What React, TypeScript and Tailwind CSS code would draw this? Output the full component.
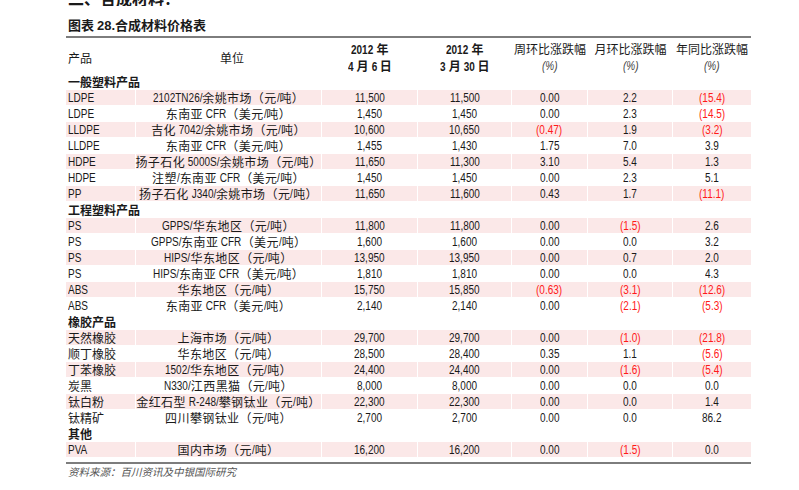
import React from "react";

type Row =
  | { kind: "section"; name: string }
  | { kind: "data"; name: string; unit: string; a: string; b: string; w: string; m: string; y: string; pink: boolean };

const d = (name: string, unit: string, a: string, b: string, w: string, m: string, y: string, pink: boolean): Row => ({
  kind: "data",
  name,
  unit,
  a,
  b,
  w,
  m,
  y,
  pink,
});

const rows: Row[] = [
  { kind: "section", name: "一般塑料产品" },
  d("LDPE", "2102TN26/余姚市场（元/吨）", "11,500", "11,500", "0.00", "2.2", "(15.4)", true),
  d("LDPE", "东南亚 CFR（美元/吨）", "1,450", "1,450", "0.00", "2.3", "(14.5)", false),
  d("LLDPE", "吉化 7042/余姚市场（元/吨）", "10,600", "10,650", "(0.47)", "1.9", "(3.2)", true),
  d("LLDPE", "东南亚 CFR（美元/吨）", "1,455", "1,430", "1.75", "7.0", "3.9", false),
  d("HDPE", "扬子石化 5000S/余姚市场（元/吨）", "11,650", "11,300", "3.10", "5.4", "1.3", true),
  d("HDPE", "注塑/东南亚 CFR（美元/吨）", "1,450", "1,450", "0.00", "2.3", "5.1", false),
  d("PP", "扬子石化 J340/余姚市场（元/吨）", "11,650", "11,600", "0.43", "1.7", "(11.1)", true),
  { kind: "section", name: "工程塑料产品" },
  d("PS", "GPPS/华东地区（元/吨）", "11,800", "11,800", "0.00", "(1.5)", "2.6", true),
  d("PS", "GPPS/东南亚 CFR（美元/吨）", "1,600", "1,600", "0.00", "0.0", "3.2", false),
  d("PS", "HIPS/华东地区（元/吨）", "13,950", "13,950", "0.00", "0.7", "2.0", true),
  d("PS", "HIPS/东南亚 CFR（美元/吨）", "1,810", "1,810", "0.00", "0.0", "4.3", false),
  d("ABS", "华东地区（元/吨）", "15,750", "15,850", "(0.63)", "(3.1)", "(12.6)", true),
  d("ABS", "东南亚 CFR（美元/吨）", "2,140", "2,140", "0.00", "(2.1)", "(5.3)", false),
  { kind: "section", name: "橡胶产品" },
  d("天然橡胶", "上海市场（元/吨）", "29,700", "29,700", "0.00", "(1.0)", "(21.8)", true),
  d("顺丁橡胶", "华东地区（元/吨）", "28,500", "28,400", "0.35", "1.1", "(5.6)", false),
  d("丁苯橡胶", "1502/华东地区（元/吨）", "24,400", "24,400", "0.00", "(1.6)", "(5.4)", true),
  d("炭黑", "N330/江西黑猫（元/吨）", "8,000", "8,000", "0.00", "0.0", "0.0", false),
  d("钛白粉", "金红石型 R-248/攀钢钛业（元/吨）", "22,300", "22,300", "0.00", "0.0", "1.4", true),
  d("钛精矿", "四川攀钢钛业（元/吨）", "2,700", "2,700", "0.00", "0.0", "86.2", false),
  { kind: "section", name: "其他" },
  d("PVA", "国内市场（元/吨）", "16,200", "16,200", "0.00", "(1.5)", "0.0", true),
];

const LATIN = '"Liberation Sans",Arial,sans-serif';
const CJK = '"Noto Sans CJK SC","Liberation Sans",sans-serif';

// Arial advance widths (em) used to compensate for the horizontal squeeze of latin runs
const AW: Record<string, number> = {
  " ": 0.278, "/": 0.278, "-": 0.333, ".": 0.278, ",": 0.278, "(": 0.333, ")": 0.333, "%": 0.889,
  A: 0.667, B: 0.667, C: 0.722, D: 0.722, E: 0.667, F: 0.611, G: 0.778, H: 0.722, I: 0.278, J: 0.5,
  K: 0.667, L: 0.556, M: 0.833, N: 0.722, O: 0.778, P: 0.667, Q: 0.778, R: 0.722, S: 0.667, T: 0.611,
  U: 0.722, V: 0.667, W: 0.944, X: 0.667, Y: 0.667, Z: 0.611,
};
const SCALE = 0.8;
const LFS = 12.5;

function emWidth(s: string) {
  let w = 0;
  for (const ch of s) w += AW[ch] ?? 0.556;
  return w;
}

function Mixed({ text, spaced }: { text: string; spaced?: boolean }) {
  const parts = text.split(/([\x20-\x7e]+)/).filter((p) => p.length > 0);
  return (
    <>
      {parts.map((p, i) =>
        /^[\x20-\x7e]+$/.test(p) ? (
          <span
            key={i}
            className="inline-block origin-left scale-x-[0.8] whitespace-pre text-[12.5px]"
            style={{ fontFamily: LATIN, marginRight: -emWidth(p) * LFS * (1 - SCALE) }}
          >
            {p}
          </span>
        ) : (
          <span key={i} className={`text-[12px] ${spaced ? "tracking-[0.4px]" : ""}`} style={{ fontFamily: CJK }}>
            {p}
          </span>
        )
      )}
    </>
  );
}

function Num({ v, last }: { v: string; last?: boolean }) {
  const red = v.startsWith("(");
  return (
    <div
      className={`flex items-center justify-center whitespace-nowrap ${last ? "" : "border-r border-white"} ${
        red ? "text-[#ff1a1a]" : "text-[#1a1a1a]"
      }`}
    >
      <Mixed text={v} />
    </div>
  );
}

function PctHead({ label }: { label: string }) {
  return (
    <div className="flex flex-col items-center">
      <span className="text-[12px]" style={{ fontFamily: CJK }}>
        {label}
      </span>
      <span className="italic text-[#444]">
        <Mixed text="(%)" />
      </span>
    </div>
  );
}

export default function App() {
  return (
    <div className="relative h-[490px] w-[799px] overflow-hidden bg-white text-[#1a1a1a]" style={{ fontFamily: CJK }}>
      <div className="ml-[66px] w-[685px]">
        <div className="flex h-[6px] items-end overflow-hidden">
          <div className="pl-[2px] text-[16px] font-bold leading-[16px]">二、合成材料：</div>
        </div>
        <div className="mt-[11px] pl-[2px] text-[13px] font-bold leading-[16px]">
          图表 <span style={{ fontFamily: LATIN }}>28.</span>合成材料价格表
        </div>
        <div className="mt-[2px] h-[2px] bg-[#7d7d7d]" />
        {/* header */}
        <div className="grid grid-cols-[70px_186px_96px_94px_76px_85px_78px] pt-[3px] text-[12px] leading-[16px]">
          <div className="flex items-center pl-[2px]">产品</div>
          <div className="flex items-center justify-center pl-[6px]">单位</div>
          <div className="flex flex-col items-center font-bold">
            <span>
              <Mixed text="2012 " />年
            </span>
            <span>
              <Mixed text="4 " />月<Mixed text=" 6 " />日
            </span>
          </div>
          <div className="flex flex-col items-center font-bold">
            <span>
              <Mixed text="2012 " />年
            </span>
            <span>
              <Mixed text="3 " />月<Mixed text=" 30 " />日
            </span>
          </div>
          <PctHead label="周环比涨跌幅" />
          <PctHead label="月环比涨跌幅" />
          <PctHead label="年同比涨跌幅" />
        </div>
        {/* body */}
        <div className="-mt-[1px] leading-[14px]">
          {rows.map((r, i) =>
            r.kind === "section" ? (
              <div key={i} className="flex h-[16px] items-center pb-[1px] pl-[2px] text-[12px] font-bold leading-[14px]">
                {r.name}
              </div>
            ) : (
              <div
                key={i}
                className={`grid h-[16px] grid-cols-[70px_186px_96px_94px_76px_85px_78px] border-b border-white ${
                  r.pink ? "bg-[#fbe8e8]" : "bg-white"
                }`}
              >
                <div className="flex items-center whitespace-nowrap border-r border-white pl-[2px]">
                  <Mixed text={r.name} />
                </div>
                <div className="flex items-center justify-center whitespace-nowrap border-r border-white">
                  <Mixed text={r.unit} spaced />
                </div>
                <Num v={r.a} />
                <Num v={r.b} />
                <Num v={r.w} />
                <Num v={r.m} />
                <Num v={r.y} last />
              </div>
            )
          )}
        </div>
        <div className="mt-[4px] h-[2px] bg-[#7d7d7d]" />
        <div className="pl-[2px] text-[10.5px] italic leading-[16px] text-[#555]">资料来源：百川资讯及中银国际研究</div>
      </div>
    </div>
  );
}
